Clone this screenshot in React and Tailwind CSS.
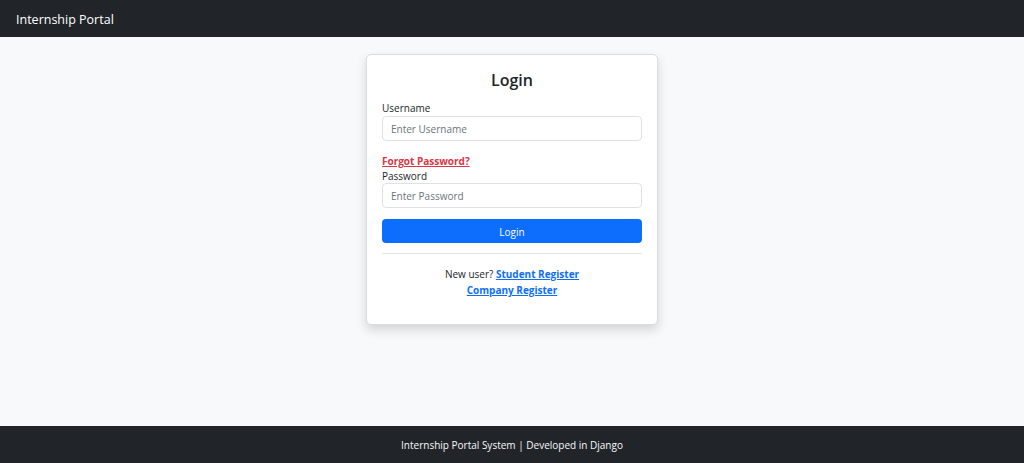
export default function App() {
  return (
    <div className="min-h-[463px] flex flex-col bg-[#f8f9fa] text-[#212529] [font-family:'Open_Sans',sans-serif] text-[10px] leading-[16px]">
      <nav className="h-[37px] bg-[#212529] flex items-center px-[16px] shrink-0">
        <span className="text-white text-[12.5px] leading-[17px] pt-[1px]">Internship Portal</span>
      </nav>
      <main className="flex-1 flex justify-center pt-[17px]">
        <div className="w-[292px] h-[271px] bg-white border border-[#dcdcdc] rounded-[5px] shadow-[0_5px_11px_rgba(0,0,0,0.15)] px-[15px] pt-[15px] flex flex-col">
          <h4 className="text-center text-[16px] h-[19px] leading-[21px] font-semibold">Login</h4>
          <label className="mt-[10px] h-[16px] leading-[18px] block">Username</label>
          <div className="mt-[1px] h-[25px] border border-[#dee2e6] rounded-[4px] flex items-center px-[8px] pt-[1px] text-[#6c757d]">
            Enter Username
          </div>
          <a className="mt-[11px] h-[16px] leading-[18px] block font-bold underline text-[#dc3545]">Forgot Password?</a>
          <label className="h-[15px] leading-[17px] block">Password</label>
          <div className="h-[25px] border border-[#dee2e6] rounded-[4px] flex items-center px-[8px] pt-[1px] text-[#6c757d]">
            Enter Password
          </div>
          <button className="mt-[11px] h-[24px] bg-[#0d6efd] text-white rounded-[4px] flex items-center justify-center pt-[1px]">
            Login
          </button>
          <hr className="mt-[10px] border-0 border-t border-[#e2e3e5]" />
          <div className="mt-[12px] text-center">
            <div>
              New user? <a className="font-bold underline text-[#0d6efd]">Student Register</a>
            </div>
            <div>
              <a className="font-bold underline text-[#0d6efd]">Company Register</a>
            </div>
          </div>
        </div>
      </main>
      <footer className="h-[37px] bg-[#212529] text-[#f8f9fa] flex items-center justify-center shrink-0 pt-[1px]">
        Internship Portal System | Developed in Django
      </footer>
    </div>
  );
}
